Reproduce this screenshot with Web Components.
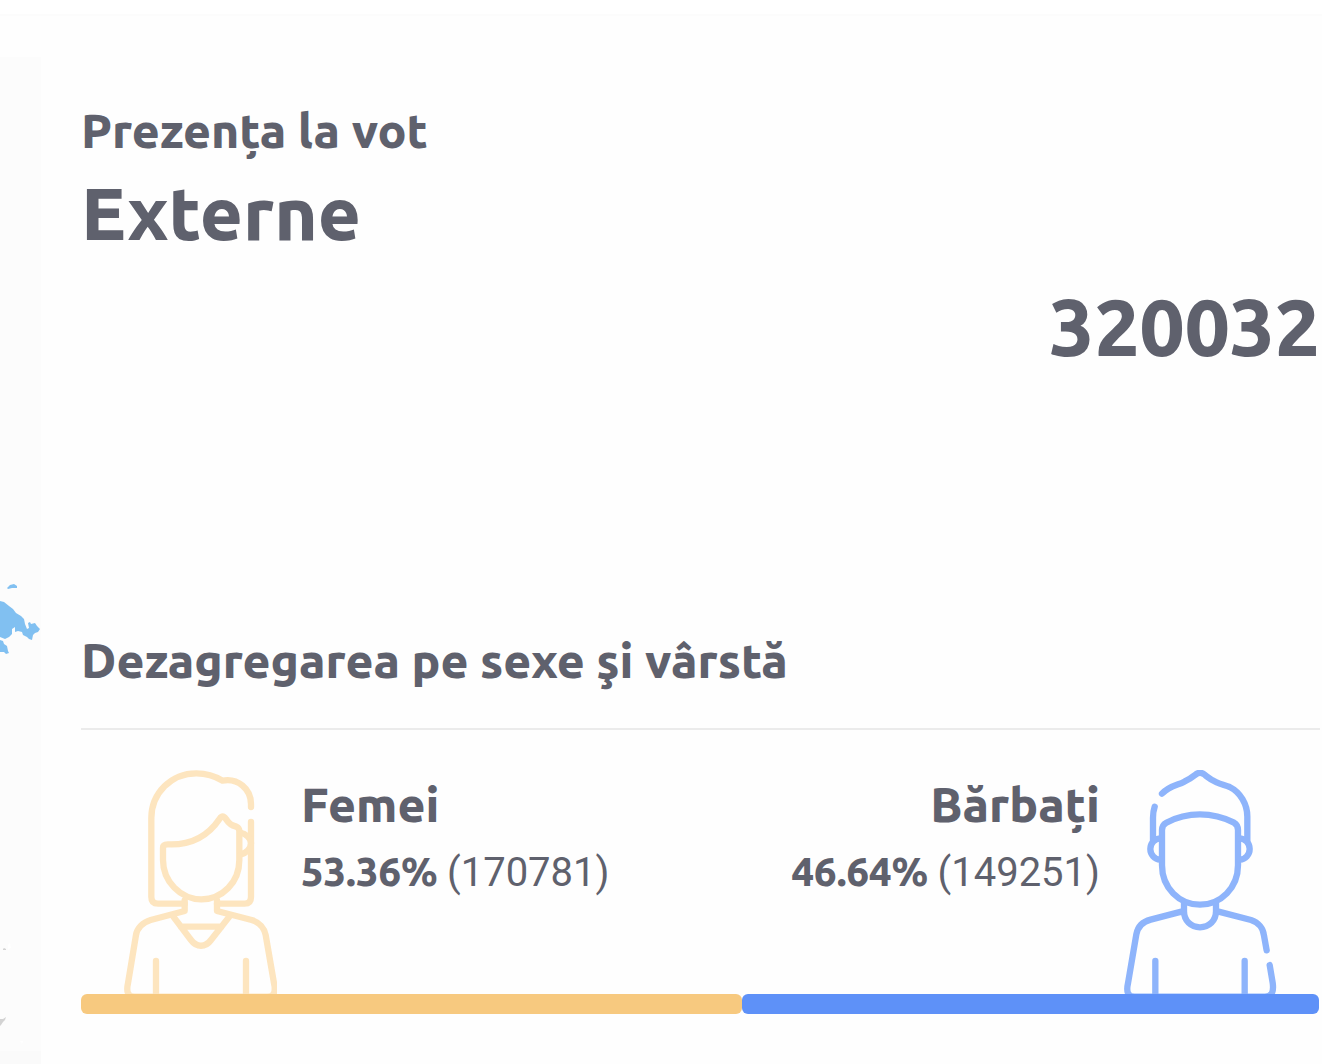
<!DOCTYPE html>
<html lang="ro">
<head>
<meta charset="utf-8">
<meta name="viewport" content="width=device-width, initial-scale=1">
<title>Prezența la vot</title>
<style>
body { margin: 0; background: #fefefe; color: #5f616d; font-family: Ubuntu, "Noto Sans", sans-serif; font-feature-settings: "locl" 0; }
</style>
</head>
<body>
<turnout-page></turnout-page>
<script>
const define = (name, html) => customElements.define(name, class extends HTMLElement {
  constructor() {
    super();
    this.attachShadow({ mode: 'open' }).innerHTML = html;
  }
});

define('map-strip', `
<style>
:host { display: block; overflow: hidden; background: #fcfcfc; }
svg { display: block; width: 41px; height: 1007px; }
</style>
<svg viewBox="0 57 41 1007" aria-hidden="true">
  <path fill="#81c0f1" d="M7 588l3-3 4-1 3 2v2l-5 0-4 1zM0 601L4 602 9 606 13 609 16 613 21 616 24 619 25 624 27 629 29 628 28 623 30 622 31 624 35 623 37 626 40 629 38 632 35 633 33 635 32 640 29 639 27 637 23 635 22 632 18 631 15 632 15 627 12 629 12 634 9 637 5 639 0 637zM0 640l3 1 1 3 3 2 1 5 1 2-3 1-2-2-4 0z"/>
  <path fill="#d3d3d3" d="M3 949l1-1 2 1v1h-3zM0 1019l3 0 3-2-1 3-2 2-2 3-1 1z"/>
  <path fill="#fff" d="M8 945l2-2 1 5-3 2zM20 1041l3 0-1 3z"/>
  <path fill="#fafafa" d="M0 1051h41v13H0z"/>
</svg>`);

define('turnout-summary', `
<style>
:host { display: block; }
h2 { margin: 0; font-size: 48px; line-height: 56px; font-weight: 800; }
h1 { margin: 0; font-size: 74px; line-height: 90px; padding-top: 10px; font-weight: 800; }
p { margin: 0; padding-top: 16px; font-size: 80px; line-height: 104px; font-weight: 800; text-align: right; }
</style>
<h2><slot name="label"></slot></h2>
<h1><slot name="place"></slot></h1>
<p><slot name="total"></slot></p>`);

define('gender-group', `
<style>
:host { display: flex; gap: 24px; }
:host([end]) { flex-direction: row-reverse; text-align: right; }
.text { padding-top: 2px; }
h3 { margin: 0; font-size: 48px; line-height: 64px; font-weight: 800; }
p { margin: 0; font-size: 40px; line-height: 72px; white-space: nowrap; }
strong { font-weight: 800; }
.count { font-family: Roboto, sans-serif; font-weight: 400; }
</style>
<slot name="icon"></slot>
<div class="text">
  <h3><slot name="name"></slot></h3>
  <p><strong><slot name="percent"></slot></strong> <span class="count"><slot name="count"></slot></span></p>
</div>`);

const iconStyle = `
<style>
:host { display: block; flex: none; }
svg { display: block; width: 154px; height: 224px; fill: none; stroke-width: 19; stroke-linecap: round; stroke-linejoin: round; }
</style>`;

define('woman-icon', iconStyle + `
<svg viewBox="39 30 462 672" stroke="#fde5bf" aria-hidden="true">
  <path d="M423 141V132C423 86 383 53 337 62C315 48 287 40 259 40C184 40 124 99 124 175V411Q124 431 144 431H224M321 431H404Q423 431 423 411V186"/>
  <path d="M159 263Q159 253 173 253C241 256 292 231 329 176Q338 163 347 176C359 194 365 196 379 200Q388 204 388 214V300C388 367 337 418 274 418C211 418 159 364 159 300Z"/>
  <path d="M391 218C408 221 423 235 423 250C423 266 408 280 391 284"/>
  <path d="M224 421V453L122 480C98 487 81 505 78 525L54 670C48 696 54 710 74 710H472C492 710 498 696 492 670L467 525C463 505 448 487 425 480L321 453V421"/>
  <path d="M190 470L243 540C260 563 286 563 303 540L358 470M213 500H334M138 603V710M408 603V710"/>
</svg>`);

define('man-icon', iconStyle + `
<svg viewBox="42 30 462 672" stroke="#8eb4fb" aria-hidden="true">
  <path d="M156 101C180 76 203 76 223 65C244 55 250 49 259 42Q270 35 281 42C291 49 297 57 320 67C334 73 347 76 359 81C391 97 412 132 412 170V242M134 140Q129 155 129 173V242"/>
  <path d="M156 210Q156 195 169 188C232 155 307 155 372 188Q384 195 384 210V316C384 383 333 434 270 434C207 434 156 383 156 316Z"/>
  <path d="M150 235C134 236 121 250 121 267C121 284 134 298 150 299M390 235C406 236 419 250 419 267C419 284 406 298 390 299"/>
  <path d="M222 429V454C222 482 243 502 270 502C297 502 318 482 318 454V429M217 454L122 479C98 485 83 502 79 523L54 670C48 696 54 710 74 710H465C485 710 492 696 488 668L479 615M323 454L423 480C445 487 460 505 462 527L470 571M136 603V710M404 603V710"/>
</svg>`);

define('share-bar', `
<style>
:host { display: flex; height: 20px; padding-right: 1px; }
i { display: block; border-radius: 6px; }
.f { flex: 5336; background: #f7c97f; }
.m { flex: 4664; background: #5e91f8; }
</style>
<i class="f"></i><i class="m"></i>`);

define('gender-breakdown', `
<style>
:host { display: block; }
h2 { margin: 0; padding-bottom: 36px; border-bottom: 2px solid #ebebeb; font-size: 48px; line-height: 64px; font-weight: 800; }
.groups { display: flex; justify-content: space-between; padding: 40px 42px 0; }
</style>
<h2>Dezagregarea pe sexe şi vârstă</h2>
<div class="groups">
  <gender-group>
    <woman-icon slot="icon"></woman-icon>
    <span slot="name">Femei</span><span slot="percent">53.36%</span><span slot="count">(170781)</span>
  </gender-group>
  <gender-group end>
    <man-icon slot="icon"></man-icon>
    <span slot="name">Bărbați</span><span slot="percent">46.64%</span><span slot="count">(149251)</span>
  </gender-group>
</div>
<share-bar></share-bar>`);

define('turnout-page', `
<style>
:host { display: block; }
header { height: 14px; background: #fff; border-bottom: 2px solid #fcfcfc; }
.body { display: grid; grid-template-columns: 41px minmax(0, 1fr); padding-top: 41px; }
main { display: flex; flex-direction: column; gap: 250px; padding: 45px 2px 0 40px; }
</style>
<header></header>
<div class="body">
  <map-strip></map-strip>
  <main>
    <turnout-summary>
      <span slot="label">Prezența la vot</span>
      <span slot="place">Externe</span>
      <span slot="total">320032</span>
    </turnout-summary>
    <gender-breakdown></gender-breakdown>
  </main>
</div>`);
</script>
</body>
</html>
